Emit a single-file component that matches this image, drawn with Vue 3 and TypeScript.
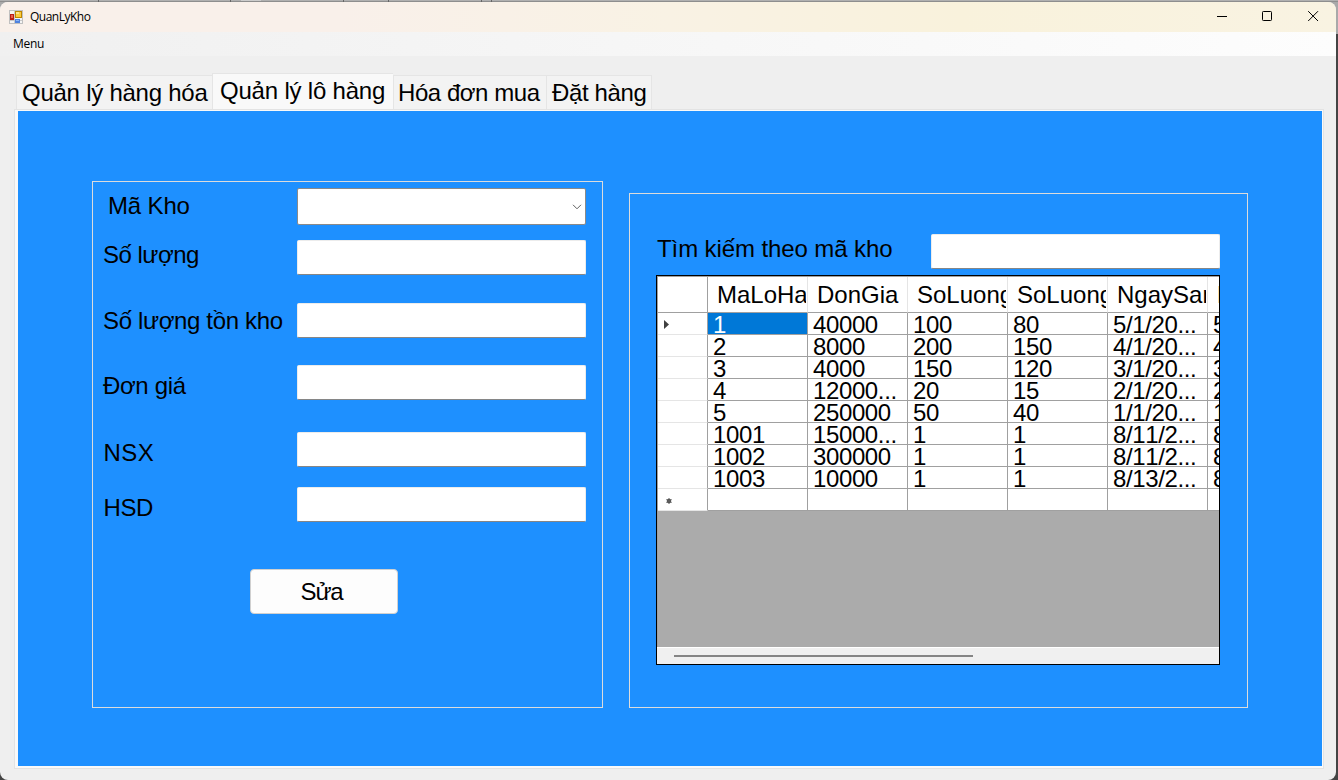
<script setup lang="ts">
interface Tab {
  title: string
  width: number
  spacing: number
  active?: boolean
}
interface Field {
  label: string
  kind: 'combo' | 'text'
  labelGap: number
  inputGap: number
  indent: number
  spacing: number
}

const tabs: Tab[] = [
  { title: 'Quản lý hàng hóa', width: 196, spacing: -0.25 },
  { title: 'Quản lý lô hàng', width: 181, spacing: -0.2, active: true },
  { title: 'Hóa đơn mua', width: 153, spacing: -0.45 },
  { title: 'Đặt hàng', width: 106, spacing: -0.35 },
]

const fields: Field[] = [
  { label: 'Mã Kho', kind: 'combo', labelGap: 10, inputGap: 6, indent: 5, spacing: -0.15 },
  { label: 'Số lượng', kind: 'text', labelGap: 22, inputGap: 15, indent: 0, spacing: -0.5 },
  { label: 'Số lượng tồn kho', kind: 'text', labelGap: 39, inputGap: 28, indent: 0, spacing: -0.35 },
  { label: 'Đơn giá', kind: 'text', labelGap: 38, inputGap: 27, indent: 0, spacing: -0.35 },
  { label: 'NSX', kind: 'text', labelGap: 40, inputGap: 32, indent: 0.5, spacing: 0.5 },
  { label: 'HSD', kind: 'text', labelGap: 28, inputGap: 20, indent: 0.5, spacing: -0.4 },
]

const columns: string[] = ['MaLoHang', 'DonGia', 'SoLuong', 'SoLuong', 'NgaySan', 'H']

const rows: string[][] = [
  ['1', '40000', '100', '80', '5/1/20...', '5'],
  ['2', '8000', '200', '150', '4/1/20...', '4'],
  ['3', '4000', '150', '120', '3/1/20...', '3'],
  ['4', '12000...', '20', '15', '2/1/20...', '2'],
  ['5', '250000', '50', '40', '1/1/20...', '1'],
  ['1001', '15000...', '1', '1', '8/11/2...', '8'],
  ['1002', '300000', '1', '1', '8/11/2...', '8'],
  ['1003', '10000', '1', '1', '8/13/2...', '8'],
  ['', '', '', '', '', ''],
]
</script>

<template>
  <div class="desktop">
    <div class="backdrop">
      <i class="tick t1"></i><i class="tick t2"></i><i class="chip"></i><i class="tick t3"></i><i class="tick t4"></i><i class="tick t5"></i><i class="tick t6"></i>
    </div>
    <div class="window">
      <header class="titlebar">
        <svg class="app-icon" width="14" height="14" viewBox="0 0 14 14" shape-rendering="crispEdges">
          <rect x="0.5" y="0.5" width="13" height="13" fill="#f4f4f4" stroke="#c0c0c0" />
          <path d="M5.5 1v12M1 4.5h4M1 10.5h12" stroke="#c9c9c9" fill="none" />
          <rect x="1" y="4" width="4" height="6" fill="#b81c16" />
          <rect x="2" y="5" width="2" height="3" fill="#e8604f" />
          <rect x="6" y="1" width="7" height="7" fill="#bd8500" />
          <rect x="7" y="2" width="5" height="5" fill="#fbcb3c" />
          <rect x="7" y="2" width="3" height="2" fill="#fde48a" />
          <rect x="6" y="9" width="5" height="4" fill="#4f83df" />
          <rect x="7" y="10" width="3" height="1" fill="#8bb4f5" />
        </svg>
        <span class="caption">QuanLyKho</span>
        <div class="controls">
          <svg width="12" height="12" viewBox="0 0 12 12"><path d="M2 6.500h10" stroke="#000" fill="none" /></svg>
          <svg width="12" height="12" viewBox="0 0 12 12"><rect x="1.500" y="1.500" width="9" height="9" rx="0.8" stroke="#000" fill="none" /></svg>
          <svg width="12" height="12" viewBox="0 0 12 12"><path d="M1.200 1.200l9.800 9.800M11 1.200l-9.800 9.800" stroke="#000" fill="none" /></svg>
        </div>
      </header>
      <nav class="menubar"><span>Menu</span></nav>
      <div class="tabs">
        <div
          v-for="tab in tabs"
          :key="tab.title"
          class="tab"
          :class="{ active: tab.active }"
          :style="{ width: tab.width + 'px', letterSpacing: tab.spacing + 'px' }"
        >{{ tab.title }}</div>
      </div>
      <main class="page">
        <section class="group editor">
          <div class="labels">
            <div
              v-for="f in fields"
              :key="f.label"
              class="label"
              :style="{ marginTop: f.labelGap + 'px', marginLeft: f.indent + 'px', letterSpacing: f.spacing + 'px' }"
            >{{ f.label }}</div>
          </div>
          <div class="inputs">
            <div v-for="f in fields" :key="f.label" :class="f.kind" :style="{ marginTop: f.inputGap + 'px' }">
              <svg v-if="f.kind === 'combo'" width="10" height="6" viewBox="0 0 10 6">
                <path d="M1 0.800l4 4l4-4" stroke="#606060" fill="none" />
              </svg>
            </div>
          </div>
          <button class="save" type="button">Sửa</button>
        </section>
        <section class="group browser">
          <div class="search">
            <span class="label">Tìm kiếm theo mã kho</span>
            <div class="text"></div>
          </div>
          <div class="datagrid">
            <div class="row head">
              <div class="stub"></div>
              <div v-for="(c, i) in columns" :key="i" class="cell"><span>{{ c }}</span></div>
            </div>
            <div v-for="(r, i) in rows" :key="i" class="row">
              <div class="stub">
                <svg v-if="i === 0" class="current" width="5" height="9" viewBox="0 0 5 9"><path d="M0 0l5 4.500l-5 4.500z" fill="#404040" /></svg>
                <svg v-if="i === rows.length - 1" class="star" width="6" height="6" viewBox="0 0 6 6">
                  <circle cx="3" cy="3" r="2.300" fill="#484848" />
                  <path d="M3 0v6M0.400 1.500l5.200 3M5.600 1.500l-5.200 3" stroke="#606060" />
                </svg>
              </div>
              <div v-for="(v, j) in r" :key="j" class="cell" :class="{ selected: i === 0 && j === 0 }">{{ v }}</div>
            </div>
            <div class="scrollbar"><div class="thumb"></div></div>
          </div>
        </section>
      </main>
    </div>
  </div>
</template>

<style>
html,
body {
  margin: 0;
  overflow: hidden;
}
</style>

<style scoped>
* {
  box-sizing: border-box;
}
.desktop {
  width: 1338px;
  height: 780px;
  overflow: hidden;
  background: linear-gradient(#a9a9a9 0, #a9a9a9 34px, #444 34px);
  font-family: 'Liberation Sans', Arial, sans-serif;
  font-size: 24px;
  font-kerning: none;
  line-height: 27px;
  color: #000;
}
.backdrop {
  height: 2px;
  background: #b0b0b0;
  border-bottom: 1px solid #8e8e8e;
  display: flex;
}
.tick {
  width: 1px;
  height: 2px;
  background: #666;
}
.t1 { margin-left: 98px; }
.t2 { margin-left: 131px; }
.chip {
  width: 20px;
  height: 1px;
  margin-left: 10px;
  background: #ccc;
}
.t3 { margin-left: 82px; }
.t4 { margin-left: 44px; }
.t5 { margin-left: 92px; }
.t6 { margin-left: 9px; }
.window {
  width: 1336px;
  height: 778px;
  background: #efefef;
  border-radius: 8px;
  overflow: hidden;
  display: flex;
  flex-direction: column;
}
.titlebar {
  height: 30px;
  flex: none;
  display: flex;
  align-items: center;
  padding-left: 9px;
  background: linear-gradient(90deg, #f9f0ea 0, #f9f0ea 340px, #f9f2e4 670px, #f9f2dc 960px, #f9f3e2 1336px);
}
.app-icon {
  flex: none;
  margin-bottom: 1px;
}
.caption {
  margin-left: 7px;
  font: 12px/16px 'Open Sans', 'Noto Sans', sans-serif;
  letter-spacing: -0.5px;
}
.controls {
  margin-left: auto;
  display: flex;
  gap: 34px;
  padding-right: 17px;
  margin-bottom: 2px;
}
.controls svg {
  display: block;
}
.menubar {
  height: 24px;
  flex: none;
  padding: 4px 0 0 13px;
  background: linear-gradient(90deg, #f0f0f0, #fdfdfd);
  font: 12px/16px 'Open Sans', 'Noto Sans', sans-serif;
  letter-spacing: -0.3px;
}
.tabs {
  height: 36px;
  margin-top: 17px;
  padding-left: 16px;
  display: flex;
  align-items: flex-end;
  flex: none;
}
.tab {
  height: 34px;
  padding-top: 3px;
  padding-left: 5px;
  border: 1px solid #e5e5e5;
  border-right-width: 0;
  border-bottom: 0;
  background: #f3f3f3;
  white-space: nowrap;
}
.tab:last-child {
  border-right-width: 1px;
}
.tab.active {
  height: 36px;
  padding-top: 3px;
  padding-left: 7px;
  background: #f9f9f9;
}
.tab.active + .tab {
  padding-left: 4px;
}
.page {
  width: 1310px;
  height: 660px;
  flex: none;
  margin-left: 14px;
  border: 1px solid #e3e3e3;
  background: #1e90ff;
  box-shadow: inset 0 0 0 1px #f9f9f9, inset 3px 0 0 #f9f9f9, inset 0 -2px 0 #f9f9f9;
  display: flex;
  align-items: flex-start;
  padding: 71px 0 0 77px;
}
.group {
  border: 1px solid #dcdcdc;
  flex: none;
}
.editor {
  width: 511px;
  height: 527px;
  display: grid;
  grid-template-columns: 204px 289px;
  grid-template-rows: 340px auto;
}
.labels {
  padding-left: 10px;
  display: flex;
  flex-direction: column;
}
.label {
  height: 27px;
  white-space: nowrap;
}
.inputs {
  display: flex;
  flex-direction: column;
}
.text {
  height: 35px;
  background: #fff;
  border: 1px solid #ececec;
  border-bottom-color: #868686;
  border-radius: 2px;
}
.combo {
  height: 37px;
  background: #fff;
  border: 1px solid #8a8a8a;
  border-radius: 2px;
  display: flex;
  justify-content: flex-end;
  align-items: center;
  padding-right: 3px;
}
.save {
  grid-column: 1 / 3;
  width: 148px;
  height: 45px;
  margin: 47px 0 0 157px;
  padding: 0 5px 0 0;
  border: 1px solid #d0d0d0;
  border-radius: 4px;
  background: #fdfdfd;
  font: inherit;
  font-kerning: none;
  letter-spacing: -1.2px;
  color: inherit;
}
.browser {
  width: 619px;
  height: 515px;
  margin: 12px 0 0 26px;
  padding: 40px 0 0 26px;
}
.search {
  display: flex;
  width: 564px;
}
.search .label {
  width: 275px;
  padding-left: 1px;
  margin-top: 1px;
  letter-spacing: -0.1px;
}
.search .text {
  width: 289px;
}
.datagrid {
  width: 564px;
  height: 390px;
  margin-top: 6px;
  border: 1px solid #000;
  background: #ababab;
  box-shadow: inset 1px 1px 0 #a0a0a0;
  padding-top: 1px;
  padding-left: 1px;
  overflow: hidden;
  display: flex;
  flex-direction: column;
  letter-spacing: -0.38px;
}
.row {
  display: flex;
  height: 22px;
  flex: none;
  background: #fff;
}
.row.head {
  height: 36px;
}
.stub {
  width: 50px;
  flex: none;
  border-right: 1px solid #a0a0a0;
  border-bottom: 1px solid #e5e5e5;
  display: flex;
  align-items: center;
  padding-left: 6px;
}
.stub .current {
  margin-top: 2px;
}
.stub .star {
  margin-left: 2px;
  margin-top: 3px;
}
.cell {
  width: 100px;
  flex: none;
  border-right: 1px solid #a0a0a0;
  border-bottom: 1px solid #a0a0a0;
  padding: 1px 0 0 5px;
  line-height: 22px;
  white-space: nowrap;
  overflow: hidden;
}
.head .stub {
  border-bottom-color: #a0a0a0;
}
.head .cell {
  border-right-color: #e5e5e5;
  padding: 4px 1px 0 9px;
  line-height: 27px;
  letter-spacing: 0;
}
.head .cell span {
  display: block;
  overflow: hidden;
}
.selected {
  background: #0078d7;
  color: #fff;
}
.scrollbar {
  height: 17px;
  flex: none;
  margin-top: auto;
  margin-left: -1px;
  border-top: 1px solid #fff;
  background: #f0f0f0;
  padding: 7px 0 0 17px;
}
.thumb {
  width: 299px;
  height: 2px;
  background: #858585;
}
</style>
